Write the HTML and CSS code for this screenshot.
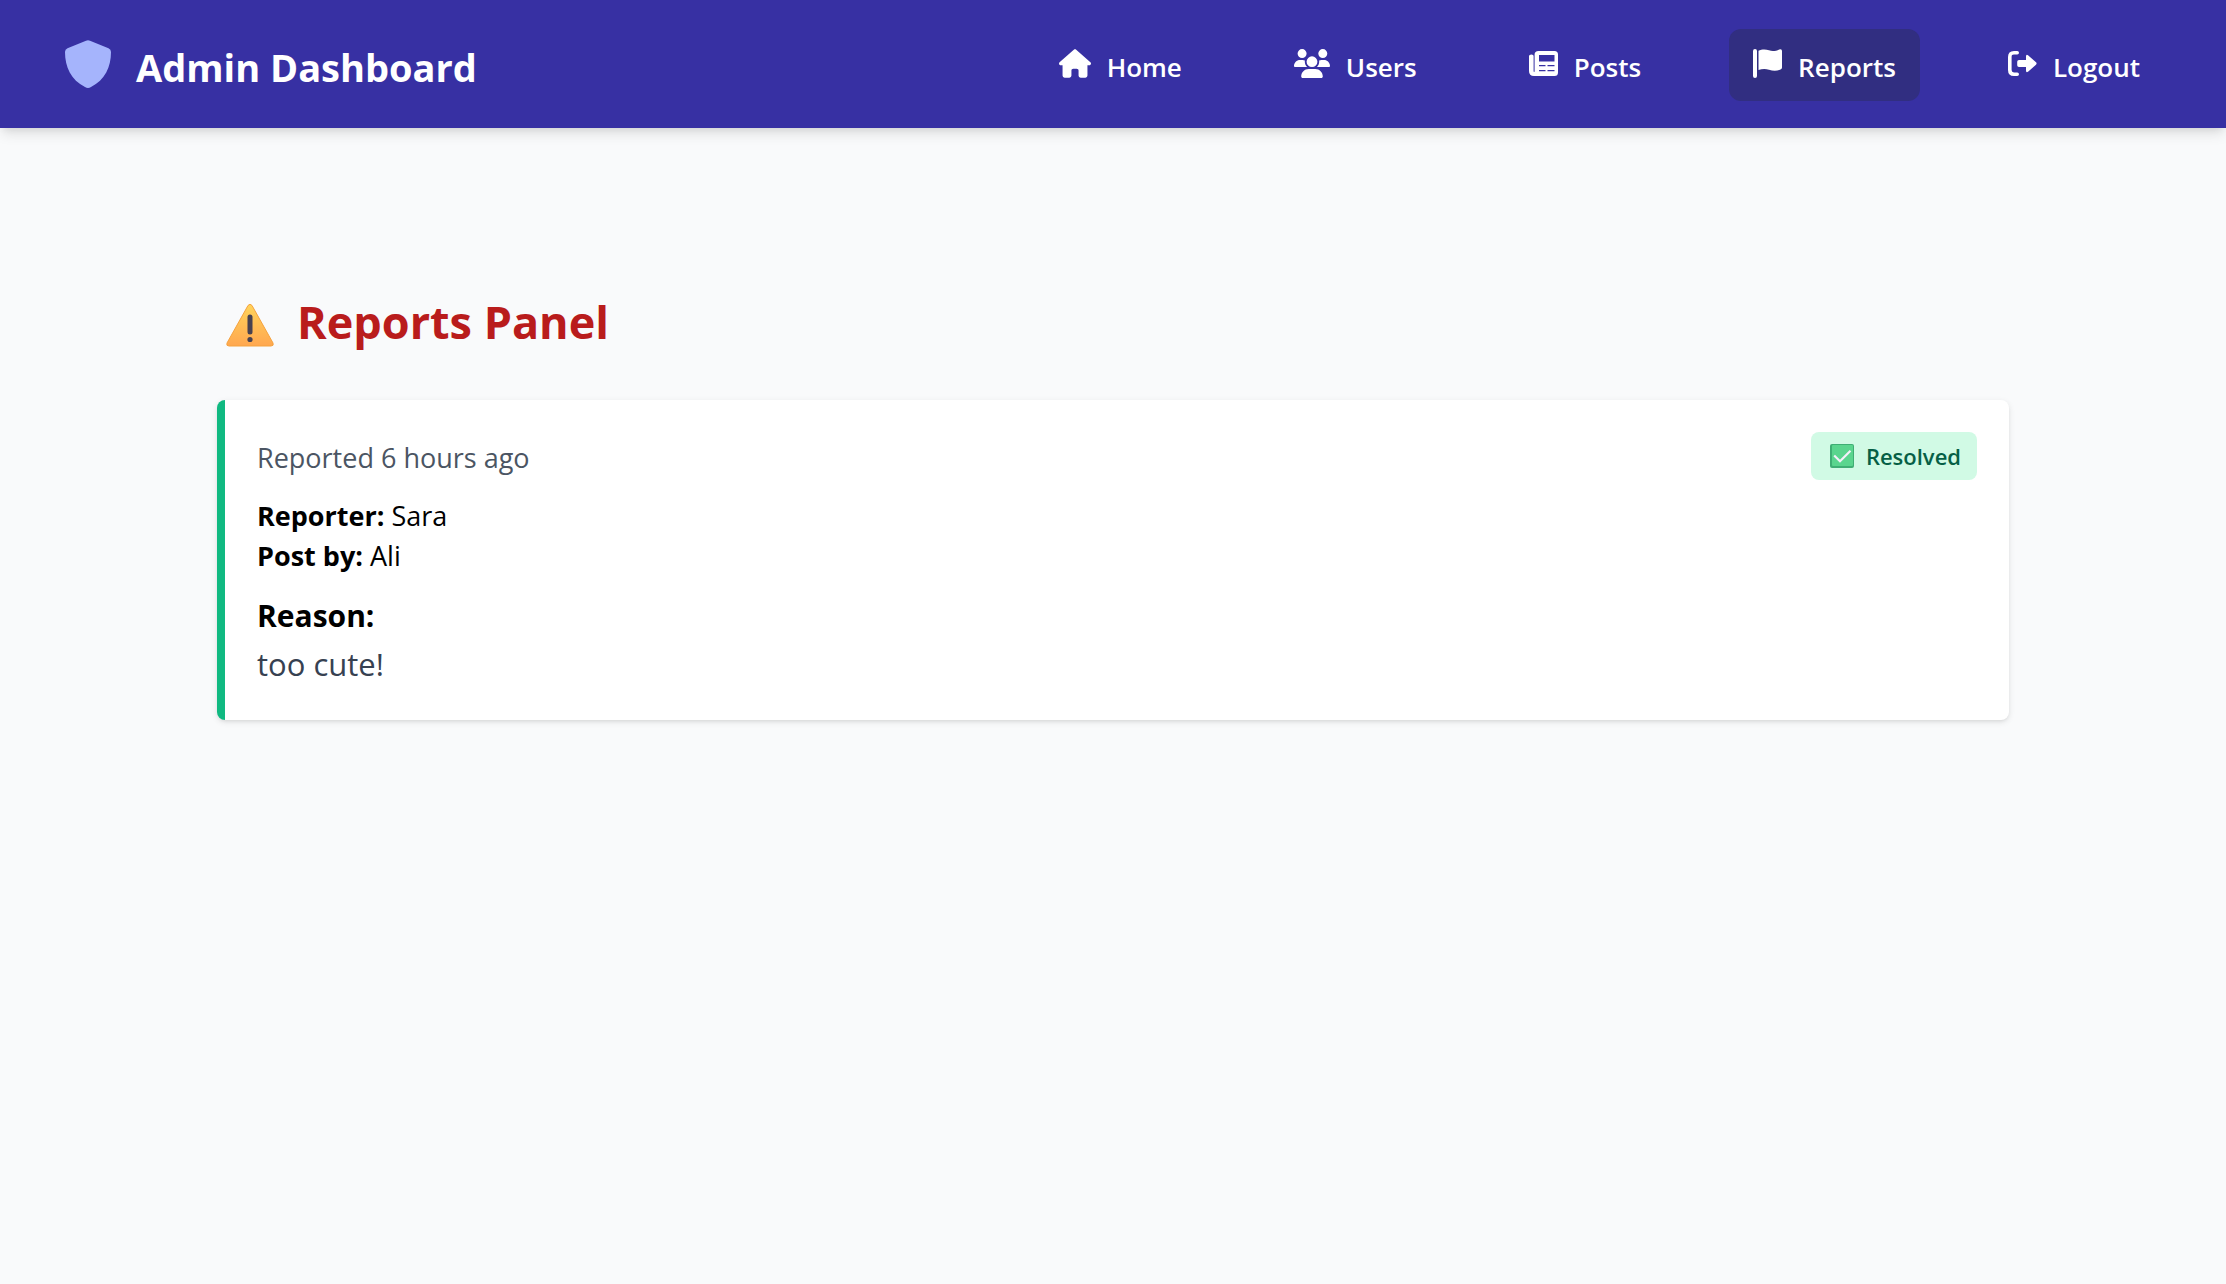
FILE: index.html
```html
<!DOCTYPE html>
<html lang="en">
<head>
<meta charset="utf-8">
<meta name="viewport" content="width=device-width, initial-scale=1">
<title>Admin Dashboard</title>
<link rel="stylesheet" href="styles.css">
</head>
<body>
<header class="topbar">
  <div class="brand">
    <svg class="brand-icon" viewBox="0 0 48 48" aria-hidden="true"><path fill="currentColor" d="M22 .7Q24-.4 26 .7L44.500 8.300Q47 9.500 47 12C47 27 41 40 27 47Q24 48.800 21 47C7 40 1 27 1 12Q1 9.500 3.500 8.300Z"/></svg>
    <span class="brand-name">Admin Dashboard</span>
  </div>
  <nav class="nav" aria-label="Main">
    <a class="nav-link" href="#home">
      <svg class="nav-icon icon-home" viewBox="0 0 576 512" aria-hidden="true"><path fill="currentColor" d="M575.800 255.500c0 18-15 32.100-32 32.100h-32l.7 160.200c0 2.700-.2 5.400-.5 8.100V472c0 22.100-17.900 40-40 40H392c-22.100 0-40-17.900-40-40v-88c0-17.700-14.300-32-32-32h-64c-17.700 0-32 14.300-32 32v88c0 22.100-17.900 40-40 40h-80c-22.100 0-40-17.900-40-40V287.600H32c-18 0-32-14-32-32.100 0-9 3-17 10-24L266.400 8c7-7 15-8 22-8s15 2 21 7l255.400 224.500c8 7 12 15 11 24z"/></svg>
      <span>Home</span>
    </a>
    <a class="nav-link" href="#users">
      <svg class="nav-icon icon-users" viewBox="0 0 640 512" aria-hidden="true"><path fill="currentColor" d="M144 0a80 80 0 1 1 0 160A80 80 0 1 1 144 0zM512 0a80 80 0 1 1 0 160A80 80 0 1 1 512 0zM0 298.700C0 239.800 47.800 192 106.700 192h42.700c15.900 0 31 3.500 44.600 9.700c-1.300 7.200-1.900 14.700-1.900 22.300c0 38.200 16.800 72.500 43.300 96H21.300C9.600 320 0 310.400 0 298.700zM405.300 320c26-23.500 42.600-57.800 42.600-96c0-7.600-.7-15-1.900-22.300c13.600-6.300 28.700-9.700 44.600-9.700h42.700C592.200 192 640 239.800 640 298.700c0 11.800-9.600 21.300-21.300 21.300H405.300zM224 224a96 96 0 1 1 192 0 96 96 0 1 1 -192 0zM128 485.300C128 411.700 187.700 352 261.300 352H378.700C452.300 352 512 411.700 512 485.300c0 14.700-11.900 26.700-26.700 26.700H154.700c-14.700 0-26.700-11.900-26.700-26.700z"/></svg>
      <span>Users</span>
    </a>
    <a class="nav-link" href="#posts">
      <svg class="nav-icon" viewBox="0 0 29 29" aria-hidden="true"><path fill="currentColor" fill-rule="evenodd" d="M9.500 2H25.500Q29 2 29 5.500V23.500Q29 27 25.500 27H5Q0 27 0 22V7Q0 5.500 2.400 5.500T4.600 7V22Q4.600 23 5.100 23T5.600 22V5.500Q5.600 2 9.500 2ZM10 6V12.500H25.500V6ZM10 16V17.200H16.500V16ZM18.500 16V17.200H25.500V16ZM10 21V22.200H16.500V21ZM18.500 21V22.200H25.500V21Z"/></svg>
      <span>Posts</span>
    </a>
    <a class="nav-link nav-link-active" href="#reports" aria-current="page">
      <svg class="nav-icon" viewBox="0 0 29 29" aria-hidden="true"><path fill="currentColor" d="M0 2Q0 0 2 0T4 2V27Q4 29 2 29T0 27ZM5.500 1.800C8.500.2 12.500-.1 16 1.300 19.500 2.700 23 2 26.200.4Q29-.5 29 2V18.500Q29 20 27.500 20.500C23.500 22.200 20 22 16 20.700 12.500 19.600 9 19.800 5.500 21Z"/></svg>
      <span>Reports</span>
    </a>
    <a class="nav-link" href="#logout">
      <svg class="nav-icon" viewBox="0 0 29 29" aria-hidden="true"><path fill="none" stroke="currentColor" stroke-width="3.600" stroke-linecap="round" d="M9.200 3.800H6Q1.800 3.800 1.800 8V21Q1.800 25.200 6 25.200H9.200"/><path fill="currentColor" d="M11 11H18V7.500Q18 5 20 6.200L28 13.300Q29.200 14.500 28 15.700L20 22.800Q18 24 18 21.500V18H11Q9.200 18 9.200 16.200V12.800Q9.200 11 11 11Z"/></svg>
      <span>Logout</span>
    </a>
  </nav>
</header>

<main class="page">
  <h1 class="page-title">
    <svg class="title-icon" viewBox="0 0 48 44" aria-hidden="true">
      <defs><linearGradient id="warn" x1="0" y1="0" x2="0" y2="1"><stop offset="0" stop-color="#ffd45a"/><stop offset="1" stop-color="#ffa750"/></linearGradient></defs>
      <path fill="url(#warn)" stroke="#f5a23f" d="M22 2.500Q24 0 26 2.500L47 40Q48 43 45 43H3Q0 43 1 40Z"/>
      <path stroke="#474150" stroke-width="5" stroke-linecap="round" d="M24 14V29"/>
      <circle cx="24" cy="36.500" r="2.600" fill="#474150"/>
    </svg>
    <span>Reports Panel</span>
  </h1>

  <article class="report">
    <div class="report-head">
      <p class="report-time">Reported 6 hours ago</p>
      <span class="badge">
        <svg class="badge-icon" viewBox="0 0 24 24" aria-hidden="true"><rect width="24" height="24" rx="2" fill="#3fae74"/><rect x="2" y="1" width="21" height="21" rx="1" fill="#5ad58e"/><path fill="none" stroke="#f4f0fa" stroke-width="2.200" d="M4.200 11.500L10 17.200L20.500 6.800"/></svg>
        <span class="badge-text">Resolved</span>
      </span>
    </div>
    <div class="report-people">
      <p><strong>Reporter:</strong> Sara</p>
      <p><strong>Post by:</strong> Ali</p>
    </div>
    <div class="report-reason">
      <h2 class="reason-title">Reason:</h2>
      <p class="reason-text">too cute!</p>
    </div>
  </article>
</main>
</body>
</html>
```
FILE: styles.css
```css
* {
  box-sizing: border-box;
}

body,
h1,
h2,
p {
  margin: 0;
}

body {
  min-height: 100vh;
  background: #f9fafb;
  color: #000;
  font-family: "Segoe UI", "Open Sans", "Noto Sans", sans-serif;
  font-size: 27px;
  line-height: 40px;
}

svg {
  display: block;
  flex: none;
}

.topbar {
  display: flex;
  align-items: center;
  justify-content: space-between;
  min-height: 128px;
  padding: 26px 62px 26px 64px;
  background: #3730a3;
  color: #fff;
  box-shadow: 0 8px 12px -2px rgba(0, 0, 0, 0.1), 0 4px 8px -4px rgba(0, 0, 0, 0.1);
}

.brand {
  display: flex;
  align-items: center;
  gap: 24px;
}

.brand-icon {
  width: 48px;
  height: 48px;
  color: #a5b4fc;
}

.brand-name {
  padding-top: 5px;
  font-size: 38px;
  font-weight: 700;
  line-height: 56px;
}

.nav {
  display: flex;
  gap: 64px;
  margin-top: 2px;
}

.nav-link {
  display: flex;
  align-items: center;
  gap: 16px;
  padding: 18px 24px 14px;
  border-radius: 12px;
  color: #fff;
  font-size: 26px;
  font-weight: 600;
  text-decoration: none;
}

.nav-link-active {
  background: #312e81;
}

.nav-icon {
  width: 29px;
  height: 29px;
  margin-bottom: 7px;
}

.icon-home {
  width: 32px;
}

.icon-users {
  width: 36px;
}

.page {
  max-width: 1792px;
  margin: 0 auto;
  padding: 164px 0 64px;
}

.page-title {
  display: flex;
  align-items: center;
  gap: 23px;
  margin-bottom: 48px;
  padding-left: 9px;
  color: #b91c1c;
  font-size: 45px;
  font-weight: 700;
  line-height: 60px;
}

.title-icon {
  width: 48px;
  height: 44px;
  margin-top: 6px;
}

.report {
  padding: 32px;
  border-left: 8px solid #10b981;
  border-radius: 8px;
  background: #fff;
  box-shadow: 0 2px 6px rgba(0, 0, 0, 0.1), 0 2px 4px -2px rgba(0, 0, 0, 0.1);
}

.report-head {
  display: flex;
  align-items: flex-end;
  justify-content: space-between;
  margin-bottom: 16px;
}

.report-time {
  padding-bottom: 2px;
  color: #4b5563;
}

.badge {
  display: flex;
  align-items: center;
  gap: 12px;
  padding: 8px 16px 8px 19px;
  border-radius: 8px;
  background: #d1fae5;
  color: #065f46;
  font-size: 22px;
  font-weight: 600;
  line-height: 32px;
}

.badge-icon {
  width: 24px;
  height: 24px;
}

.report-people {
  margin-bottom: 16px;
}

.report-reason {
  line-height: 48px;
}

.reason-title {
  font-size: 30px;
  font-weight: 700;
}

.reason-text {
  color: #374151;
  font-size: 31px;
}
```
